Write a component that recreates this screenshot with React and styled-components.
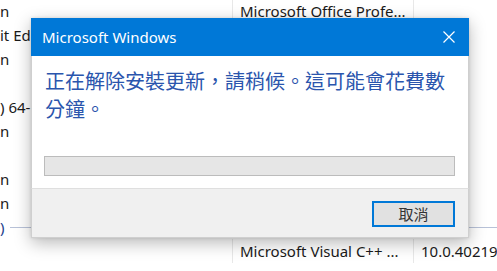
import React from 'react';
import styled, { createGlobalStyle } from 'styled-components';

const GlobalStyle = createGlobalStyle`
    html, body {
        margin: 0;
        padding: 0;
        background: #ffffff;
        overflow: hidden;
    }
    body {
        font-family: "Noto Sans", "Noto Sans CJK TC", sans-serif;
    }
`;

const Page = styled.div`
    position: relative;
    width: 497px;
    height: 271px;
    overflow: hidden;
    background: #ffffff;
`;

const List = styled.div`
    display: flex;
    flex-direction: column;
    margin-top: -1px;
`;

const Row = styled.div`
    display: grid;
    grid-template-columns: 232px 181px 1fr;
    height: 24px;
    align-items: center;
    font-size: 15px;
    color: #1a1a1a;
    white-space: nowrap;
`;

const Cell = styled.div`
    height: 24px;
    line-height: 24px;
    padding-left: ${p => (p.$first ? 0 : 7)}px;
    border-left: ${p => (p.$first ? 'none' : '1px solid #e8e8e8')};
    overflow: hidden;
`;

const GroupRow = styled.div`
    display: flex;
    align-items: center;
    height: 24px;
    font-size: 15px;
    color: #1e3f8c;
    white-space: nowrap;
`;

const GroupLine = styled.div`
    flex: 1;
    height: 1px;
    margin-left: 5px;
    background: #b8c2d8;
`;

const Dialog = styled.div`
    position: absolute;
    left: 31px;
    top: 18px;
    width: 438px;
    display: flex;
    flex-direction: column;
    background: #ffffff;
    box-shadow: 0 5px 16px rgba(0, 0, 0, 0.28), 0 0 3px rgba(0, 0, 0, 0.12);
`;

const TitleBar = styled.div`
    display: flex;
    align-items: center;
    justify-content: space-between;
    height: 38px;
    background: #0078d7;
    color: #ffffff;
    font-size: 15px;
    padding-left: 11px;
`;

const CloseButton = styled.div`
    width: 40px;
    height: 38px;
    display: flex;
    align-items: center;
    justify-content: center;
`;

const Body = styled.div`
    padding: 11px 13px 12px 12px;
    border-left: 1px solid #cfcfcf;
    border-right: 1px solid #cfcfcf;
`;

const Message = styled.div`
    font-family: "Noto Sans CJK TC", sans-serif;
    font-size: 20px;
    line-height: 28px;
    color: #2a55ad;
    padding-left: 1px;
`;

const Progress = styled.div`
    margin-top: 33px;
    height: 18px;
    background: #e6e6e6;
    border: 1px solid #bcbcbc;
`;

const Footer = styled.div`
    display: flex;
    justify-content: flex-end;
    height: 50px;
    padding: 12px 13px 0 0;
    box-sizing: border-box;
    background: #f0f0f0;
    border-top: 1px solid #dfdfdf;
    border-left: 1px solid #cfcfcf;
    border-right: 1px solid #cfcfcf;
    border-bottom: 1px solid #cfcfcf;
`;

const Button = styled.button`
    width: 83px;
    height: 26px;
    padding: 0;
    border: 2px solid #0078d7;
    background: #e1e1e1;
    font-family: "Noto Sans CJK TC", sans-serif;
    font-size: 15px;
    color: #333333;
    line-height: 20px;
`;

const rows = [
    ['n', 'Microsoft Office Profe...', ''],
    ['it Ed', '', ''],
    ['n', '', ''],
    ['', '', ''],
    [') 64-', '', ''],
    ['n', '', ''],
    ['', '', ''],
    ['n', '', ''],
    ['n', '', ''],
];

const App = () => {
    return (
        <Page>
            <GlobalStyle />
            <List>
                {rows.map((r, i) => (
                    <Row key={i}>
                        <Cell $first>{r[0]}</Cell>
                        <Cell>{r[1]}</Cell>
                        <Cell>{r[2]}</Cell>
                    </Row>
                ))}
                <GroupRow>
                    <span>)</span>
                    <GroupLine />
                </GroupRow>
                <Row>
                    <Cell $first></Cell>
                    <Cell>Microsoft Visual C++ ...</Cell>
                    <Cell>10.0.40219</Cell>
                </Row>
            </List>
            <Dialog>
                <TitleBar>
                    <span>Microsoft Windows</span>
                    <CloseButton>
                        <svg width="12" height="12" viewBox="0 0 12 12">
                            <path d="M0.5 0.5 L11.5 11.5 M11.5 0.5 L0.5 11.5" stroke="#ffffff" strokeWidth="1.2" />
                        </svg>
                    </CloseButton>
                </TitleBar>
                <Body>
                    <Message>正在解除安裝更新，請稍候。這可能會花費數分鐘。</Message>
                    <Progress />
                </Body>
                <Footer>
                    <Button>取消</Button>
                </Footer>
            </Dialog>
        </Page>
    );
};

export default App;
